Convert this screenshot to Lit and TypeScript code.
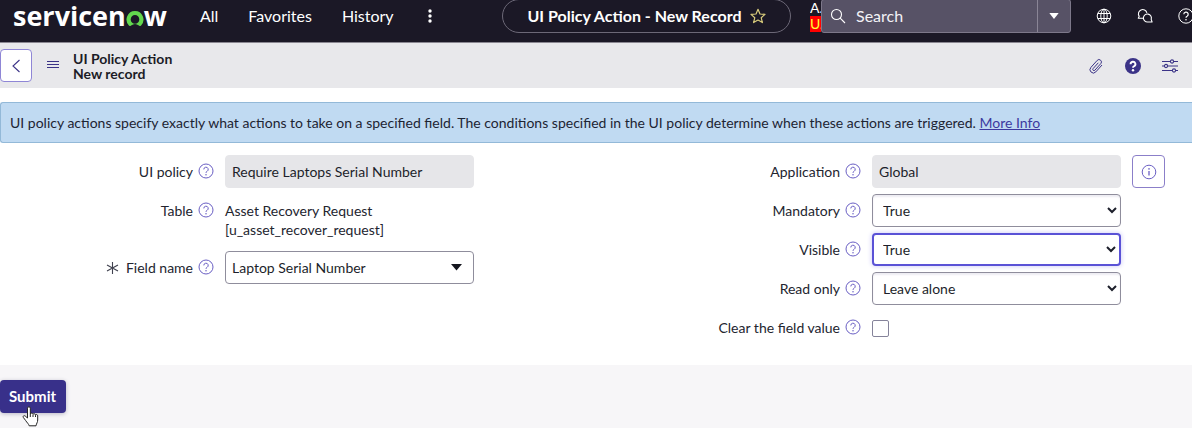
import { LitElement, html, css } from "lit";
import { customElement } from "lit/decorators.js";

const helpIcon = html`<svg class="help" viewBox="0 0 16 16" width="16" height="16" aria-hidden="true">
  <circle cx="8" cy="8" r="7" fill="none" stroke="currentColor" />
  <path d="M5.8 6.4a2.2 2.2 0 1 1 3.3 1.9c-.8.4-1.1.8-1.1 1.5" fill="none" stroke="currentColor" />
  <circle cx="8" cy="11.8" r=".75" fill="currentColor" />
</svg>`;

@customElement("nav-bar")
export class NavBar extends LitElement {
  static styles = css`
    :host { display: block; }
    .bar {
      display: flex; align-items: center; height: 32px; padding-bottom: 10px;
      background: #1b1826; border-bottom: 1px solid #8a8791; color: #fff;
      font-size: 16px; line-height: 20px;
    }
    .logo {
      display: flex; align-items: baseline; flex: none; padding-left: 13px; width: 200px; box-sizing: border-box;
      font: 700 27px/28px "Open Sans", sans-serif; color: #fff; text-decoration: none;
    }
    .logo svg { flex: none; }
    .menu { display: flex; align-items: center; gap: 30px; flex: none; }
    .menu a { color: #fff; text-decoration: none; }
    button { font: inherit; color: inherit; background: none; border: 0; padding: 0; cursor: pointer; }
    svg { display: block; }
    .middle { flex: 1; display: flex; justify-content: flex-end; padding-right: 19px; }
    .pill {
      display: flex; align-items: center; justify-content: center; gap: 8px; box-sizing: border-box;
      width: 289px; height: 34px; border: 1px solid #6c6877; border-radius: 17px; font-weight: 700;
      white-space: nowrap;
    }
    .user { width: 11px; overflow: hidden; font-size: 14px; line-height: 16px; flex: none; }
    .user span { display: block; }
    .user .alert { background: #f00; color: #ff3; }
    .search {
      display: flex; align-items: center; flex: none; box-sizing: border-box; width: 250px; height: 34px;
      background: #575266; border: 1px solid #7d788a; border-radius: 3px;
    }
    .search svg { flex: none; }
    .search .glass { margin-left: 8px; }
    .search input {
      flex: 1; min-width: 0; padding: 0 0 0 10px; border: 0; outline: 0; background: none;
      color: #fff; font: inherit;
    }
    .search input::placeholder { color: #f3f2f6; opacity: 1; }
    .drop { display: flex; align-items: center; justify-content: center; align-self: stretch; width: 33px; border-left: 1px solid #8a8596; }
    .tools { display: flex; gap: 25px; margin: 0 -2px 0 25px; flex: none; }
  `;
  render() {
    return html`<header class="bar">
      <a class="logo" href="#" aria-label="servicenow">servicen<svg width="18" height="15" viewBox="0 0 18 15" aria-hidden="true">
        <path fill="#62d84e" d="M9 0A8.600 8.600 0 0 0 2.900 14.500a1.600 1.600 0 0 0 2.200.1 6 6 0 0 1 7.800 0 1.600 1.600 0 0 0 2.200-.1A8.600 8.600 0 0 0 9 0Zm0 12.700a4.300 4.300 0 1 1 0-8.600A4.300 4.300 0 0 1 9 12.700Z"/>
      </svg>w</a>
      <nav class="menu">
        <a href="#">All</a><a href="#">Favorites</a><a href="#">History</a>
        <button aria-label="More"><svg width="12" height="16" viewBox="0 0 12 16" fill="#fff"><circle cx="6" cy="3" r="1.700"/><circle cx="6" cy="8" r="1.700"/><circle cx="6" cy="13" r="1.700"/></svg></button>
      </nav>
      <div class="middle"><div class="pill"><span>UI Policy Action - New Record</span>
        <button aria-label="Favorite"><svg width="16" height="16" viewBox="0 0 16 16"><path d="M8 1.300l2 4.700 5 .4-3.800 3.300 1.200 4.900L8 12l-4.400 2.600 1.200-4.900L1 6.400l5-.4z" fill="none" stroke="#d9cc7c" stroke-width="1.200" stroke-linejoin="round"/></svg></button>
      </div></div>
      <div class="user"><span>A.</span><span class="alert">U.</span></div>
      <div class="search">
        <svg class="glass" width="16" height="16" viewBox="0 0 16 16" fill="none" stroke="#fff" stroke-width="1.100"><circle cx="6.500" cy="6.500" r="5"/><path d="M10.200 10.200L15 15"/></svg>
        <input type="search" placeholder="Search" aria-label="Search" />
        <button class="drop" aria-label="Search scope"><svg width="10" height="6" viewBox="0 0 10 6"><path d="M.3 0h9.400L5 6z" fill="#fff"/></svg></button>
      </div>
      <div class="tools">
        <button aria-label="Language"><svg width="16" height="16" viewBox="0 0 16 16" fill="none" stroke="#fff"><circle cx="8" cy="8" r="6.800"/><ellipse cx="8" cy="8" rx="3.200" ry="6.800"/><path d="M8 1v14M1.800 5.500h12.400M1.800 10.500h12.400"/></svg></button>
        <button aria-label="Conversations"><svg width="16" height="16" viewBox="0 0 16 16" fill="none" stroke="#fff" stroke-width="1.100" stroke-linejoin="round"><path d="M6 10.300H1.300l.9-2A4.300 4.300 0 1 1 9.900 4.800"/><path d="M14.200 11.300l.9 2.700h-4.300a4 4 0 1 1 3.400-2.700Z"/></svg></button>
        <button aria-label="Help"><svg width="16" height="16" viewBox="0 0 16 16" fill="none" stroke="#fff"><circle cx="8" cy="8" r="7.200"/><path d="M5.800 6.300a2.200 2.200 0 1 1 3.300 1.900c-.8.400-1.100.8-1.100 1.500" stroke-width="1.200"/><circle cx="8" cy="11.800" r=".4"/></svg></button>
      </div>
    </header>`;
  }
}

@customElement("record-header")
export class RecordHeader extends LitElement {
  static styles = css`
    :host { display: block; }
    .head { display: flex; align-items: center; height: 45px; background: #e8e8eb; color: #3b3387; }
    button { background: none; border: 0; padding: 0; color: inherit; cursor: pointer; }
    svg { display: block; }
    .back {
      display: flex; align-items: center; justify-content: center; box-sizing: border-box;
      width: 32px; height: 33px; background: #fff; border: 1px solid #8f86d6; border-radius: 4px;
    }
    .lines { margin-left: 15px; }
    h1 { flex: 1; margin: 0 0 0 14px; font-size: 14px; line-height: 15px; font-weight: 700; color: #1b1c26; }
    h1 span { display: block; }
    .tools { display: flex; align-items: center; gap: 21px; padding-right: 14px; }
  `;
  render() {
    return html`<div class="head">
      <button class="back" aria-label="Back"><svg width="10" height="14" viewBox="0 0 10 14"><path d="M8.500 1 2 7l6.500 6" fill="none" stroke="currentColor" stroke-width="1.100"/></svg></button>
      <button class="lines" aria-label="Menu"><svg width="12" height="10" viewBox="0 0 12 10"><path d="M0 .5h12M0 3.500h12M0 6.500h12" stroke="currentColor"/></svg></button>
      <h1><span>UI Policy Action</span><span>New record</span></h1>
      <div class="tools">
        <button aria-label="Attachments"><svg width="16" height="16" viewBox="0 0 16 16"><path d="M13.500 6.500 7.300 13.400a3.300 3.300 0 0 1-4.900-4.500l6.300-7a2.400 2.400 0 0 1 3.600 3.200l-5.900 6.600a1.200 1.200 0 0 1-1.800-1.600L9.800 4.300" transform="translate(.5 .5)" fill="none" stroke="currentColor"/></svg></button>
        <button aria-label="Help"><svg width="16" height="16" viewBox="0 0 16 16"><circle cx="8" cy="8" r="8" fill="currentColor"/><path d="M5.600 6.200a2.400 2.400 0 1 1 3.600 2C8.400 8.600 8 8.800 8 9.800" fill="none" stroke="#fff" stroke-width="1.900"/><circle cx="8" cy="12.200" r="1.200" fill="#fff"/></svg></button>
        <button aria-label="Settings"><svg width="16" height="14" viewBox="0 0 16 14" fill="#e8e8eb" stroke="currentColor" stroke-width="1.100"><path d="M0 2.500h16M0 7h16M0 11.500h16"/><circle cx="10" cy="2.500" r="1.600"/><circle cx="4" cy="7" r="1.600"/><circle cx="12" cy="11.500" r="1.600"/></svg></button>
      </div>
    </div>`;
  }
}

@customElement("policy-form")
export class PolicyForm extends LitElement {
  static styles = css`
    :host { display: block; }
    .form { display: grid; grid-template-columns: 647fr 545fr; padding: 12px 0 21px; }
    .col { display: flex; flex-direction: column; gap: 6px; }
    .row { display: grid; column-gap: 11px; grid-template-columns: 214fr 249fr 60fr; align-items: start; min-height: 33px; }
    .left .row { grid-template-columns: 214fr 249fr 162fr; }
    label, .label { display: flex; align-items: center; justify-content: flex-end; gap: 5px; height: 33px; white-space: nowrap; }
    .help { color: #6a5fc4; display: block; margin-bottom: 2px; }
    .star { margin-right: 2px; }
    .text, select {
      box-sizing: border-box; width: 100%; height: 33px; margin: 0; border: 1px solid #8f8d9c; border-radius: 4px;
      background-color: #fff; color: #1d1f2b; font: inherit; outline: 0;
    }
    .text { padding: 0 6px; border-color: #e6e6e9; background: #e6e6e9; }
    select { padding: 0 6px; }
    select:not(.plain) { box-shadow: inset 0 2px 2px #eeedf3; }
    select.active { border: 2px solid #5a52d6; padding: 0 5px; box-shadow: 0 0 4px 1px #d9d7f8; }
    .combo { display: grid; align-items: center; }
    .combo > * { grid-area: 1 / 1; }
    .combo svg { justify-self: end; margin-right: 12px; pointer-events: none; }
    .plain { appearance: none; }
    .value { padding: 7px 0 6px; line-height: 19px; overflow-wrap: anywhere; }
    .info {
      display: flex; align-items: center; justify-content: center; width: 33px; height: 33px; padding: 0;
      background: #fff; border: 1px solid #8b7fc9; border-radius: 4px; color: #6a5fc4;
    }
    .check { appearance: none; width: 17px; height: 17px; margin: 9px 0 0; border: 1px solid #85839a; border-radius: 2px; background: #fff; }
  `;
  render() {
    return html`<form class="form" id="record">
      <div class="col left">
        <div class="row"><label for="policy">UI policy ${helpIcon}</label><input class="text" id="policy" readonly value="Require Laptops Serial Number" /></div>
        <div class="row"><div class="label">Table ${helpIcon}</div><div class="value">Asset Recovery Request<br />[u_asset_recover_request]</div></div>
        <div class="row"><label for="field"><svg class="star" width="13" height="14" viewBox="0 0 13 14" aria-hidden="true"><path d="M6.500 1v12M1 4l11 6M12 4 1 10" stroke="#40424f" stroke-width="1.100"/></svg>Field name ${helpIcon}</label>
          <div class="combo"><select class="plain" id="field"><option>Laptop Serial Number</option></select><svg width="11" height="7" viewBox="0 0 11 7" aria-hidden="true"><path d="M0 0h11L5.500 6.500z" fill="#15161f"/></svg></div></div>
      </div>
      <div class="col">
        <div class="row"><label for="app">Application ${helpIcon}</label><input class="text" id="app" readonly value="Global" />
          <button class="info" type="button" aria-label="Application details"><svg width="16" height="16" viewBox="0 0 16 16"><circle cx="8" cy="8" r="6.800" fill="none" stroke="currentColor"/><path d="M8 7v4.500" stroke="currentColor" stroke-width="1.300"/><circle cx="8" cy="4.900" r=".8" fill="currentColor"/></svg></button></div>
        ${this.choice("mandatory", "Mandatory", "True")}
        ${this.choice("visible", "Visible", "True", true)}
        ${this.choice("readonly", "Read only", "Leave alone")}
        <div class="row"><label for="clear">Clear the field value ${helpIcon}</label><input class="check" id="clear" type="checkbox" /></div>
      </div>
    </form>`;
  }
  choice(id: string, name: string, value: string, active = false) {
    return html`<div class="row"><label for=${id}>${name} ${helpIcon}</label>
      <select id=${id} class=${active ? "active" : ""}>
        ${["Leave alone", "True", "False"].map((o) => html`<option ?selected=${o === value}>${o}</option>`)}
      </select></div>`;
  }
}

@customElement("app-root")
export class AppRoot extends LitElement {
  static styles = css`
    :host {
      display: flex; flex-direction: column; min-height: 100vh; background: #fff; overflow: hidden;
      font-family: Lato, sans-serif; font-size: 14px; line-height: 19px; color: #23252f;
    }
    .notice {
      margin: 14px 0 0; padding: 10px 9px; background: #c0daf2; border: 1px solid #93b9d8; border-right: 0;
      border-radius: 3px 0 0 3px; color: #1d2433;
    }
    .notice a { color: #3d3aa0; }
    .foot { flex: 1; padding: 15px 0; background: #f7f6f8; }
    .submit {
      position: relative; display: block; height: 33px; padding: 0 10px 0 9px; border: 0; border-radius: 4px;
      background: #38308a; color: #fff; font: inherit; font-size: 15px; font-weight: 700; box-shadow: 0 1px 4px #b9b7c6;
    }
    .pointer { position: absolute; left: 22px; top: 26px; }
  `;
  render() {
    return html`<nav-bar></nav-bar>
      <record-header></record-header>
      <main>
        <p class="notice">UI policy actions specify exactly what actions to take on a specified field. The conditions specified in the UI policy determine when these actions are triggered. <a href="#">More Info</a></p>
        <policy-form></policy-form>
      </main>
      <div class="foot"><button class="submit" type="button">Submit
        <svg class="pointer" width="17" height="21" viewBox="0 0 17 21" aria-hidden="true"><path d="M5.500 12V2.200a1.400 1.400 0 0 1 2.800 0V8c.2-1.300 2.500-1.100 2.700.3.400-1 2.300-.7 2.500.6.500-.8 2.200-.4 2.200.9V14c0 2.200-1.200 3.400-1.700 5.800H7.200c-.4-1.700-2.300-3.300-3.500-5.200L1.300 11.400c-.7-1.300.8-2.300 1.900-1.400z" fill="#fff" stroke="#222" stroke-width="1"/><path d="M8.300 8v3M11 8.500V11M13.500 9.200V11" stroke="#222"/></svg>
      </button></div>`;
  }
}
